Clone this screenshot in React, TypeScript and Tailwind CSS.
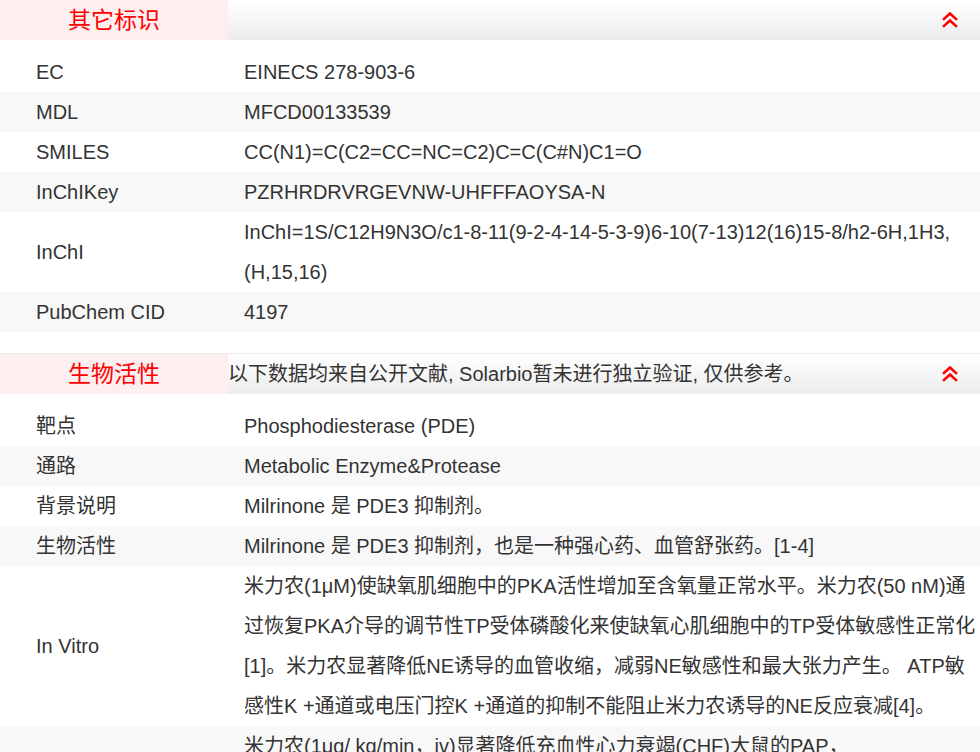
import React from 'react';

interface Row {
  label: string;
  value: React.ReactNode;
  tall?: boolean;
}

const otherIds: Row[] = [
  { label: 'EC', value: 'EINECS 278-903-6' },
  { label: 'MDL', value: 'MFCD00133539' },
  { label: 'SMILES', value: 'CC(N1)=C(C2=CC=NC=C2)C=C(C#N)C1=O' },
  { label: 'InChIKey', value: 'PZRHRDRVRGEVNW-UHFFFAOYSA-N' },
  { label: 'InChI', value: 'InChI=1S/C12H9N3O/c1-8-11(9-2-4-14-5-3-9)6-10(7-13)12(16)15-8/h2-6H,1H3,(H,15,16)' },
  { label: 'PubChem CID', value: '4197' },
];

const bioActivity: Row[] = [
  { label: '靶点', value: 'Phosphodiesterase (PDE)' },
  { label: '通路', value: 'Metabolic Enzyme&Protease' },
  { label: '背景说明', value: 'Milrinone 是 PDE3 抑制剂。' },
  { label: '生物活性', value: 'Milrinone 是 PDE3 抑制剂，也是一种强心药、血管舒张药。[1-4]' },
  {
    label: 'In Vitro',
    value:
      '米力农(1μM)使缺氧肌细胞中的PKA活性增加至含氧量正常水平。米力农(50 nM)通过恢复PKA介导的调节性TP受体磷酸化来使缺氧心肌细胞中的TP受体敏感性正常化[1]。米力农显著降低NE诱导的血管收缩，减弱NE敏感性和最大张力产生。 ATP敏感性K +通道或电压门控K +通道的抑制不能阻止米力农诱导的NE反应衰减[4]。',
  },
  // only the first line of this row is in view; label sits lower, out of frame
  { label: 'In Vivo', value: '米力农(1μg/ kg/min，iv)显著降低充血性心力衰竭(CHF)大鼠的PAP，', tall: true },
];

function Chevrons() {
  return (
    <svg width="18" height="18" viewBox="0 0 18 18" fill="none" stroke="#f00" strokeWidth="2.6" strokeLinecap="square">
      <polyline points="3,8 9,2.5 15,8" />
      <polyline points="3,15 9,9.5 15,15" />
    </svg>
  );
}

function SectionHeader({ title, note, first }: { title: string; note?: string; first?: boolean }) {
  return (
    <div className={`flex h-[41px] border-t border-[#f0e6e6] ${first ? '-mt-px' : ''}`}>
      <div className="w-[228px] shrink-0 bg-[#fdeeef] flex items-center justify-center text-[23px] text-[#ff0000]">
        {title}
      </div>
      <div className="flex-1 flex items-center justify-between bg-gradient-to-b from-white to-[#ececec] pr-[21px]">
        <span className="text-[20px] text-[#333] whitespace-nowrap">{note}</span>
        <Chevrons />
      </div>
    </div>
  );
}

function InfoTable({ rows }: { rows: Row[] }) {
  return (
    <div className="mt-3">
      {rows.map((row, i) => (
        <div
          key={row.label}
          className={`flex ${row.tall ? 'min-h-[160px]' : ''} ${i % 2 === 1 ? 'bg-[#f8f8f8]' : 'bg-white'}`}
        >
          <div className="w-[228px] shrink-0 pl-[36px] leading-[40px] self-center">{row.label}</div>
          <div className={`flex-1 pl-4 leading-[40px] break-words min-w-0 ${row.tall ? 'self-start' : 'self-center'}`}>
            {row.value}
          </div>
        </div>
      ))}
    </div>
  );
}

export default function App() {
  return (
    <div
      className="w-[980px] h-[752px] overflow-hidden bg-white text-[20px] text-[#333]"
      style={{ fontFamily: '"Liberation Sans", Arial, "Noto Sans CJK SC", sans-serif' }}
    >
      <SectionHeader title="其它标识" first />
      <InfoTable rows={otherIds} />
      <div className="h-[21px]" />
      <SectionHeader title="生物活性" note="以下数据均来自公开文献, Solarbio暂未进行独立验证, 仅供参考。" />
      <InfoTable rows={bioActivity} />
    </div>
  );
}
